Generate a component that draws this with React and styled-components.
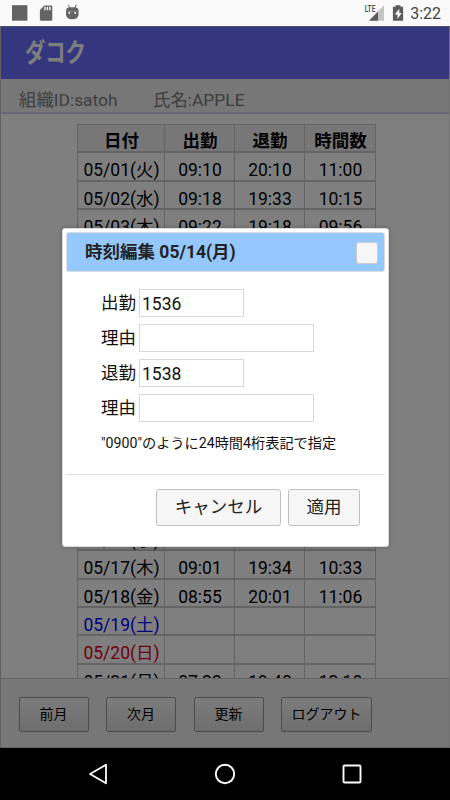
import React, { useState } from 'react'
import styled, { createGlobalStyle } from "styled-components"

const GlobalStyle = createGlobalStyle`
  *{
    box-sizing:border-box;
  }
  body{
    margin:0;
    font-family:Roboto,"Noto Sans CJK JP",sans-serif;
    overflow:hidden;
  }
`
const Screen = styled.div`
  width:450px;
  height:800px;
  display:flex;
  flex-direction:column;
  overflow:hidden;
  background-color:#000;
`
const StatusBar = styled.div`
  height:26px;
  flex:none;
  display:flex;
  justify-content:space-between;
  align-items:center;
  padding:0 9px 0 12px;
  background-color:#fafafa;
`
const StatusGroup = styled.div`
  display:flex;
  align-items:center;
  svg{
    display:block;
  }
`
const Clock = styled.span`
  margin-left:6px;
  padding-top:2px;
  font-size:16px;
  line-height:24px;
  color:#444;
`
const Page = styled.div`
  position:relative;
  height:722px;
  flex:none;
  display:flex;
  flex-direction:column;
  background-color:#fff;
  border:1px solid #c4c4c4;
  border-top-color:#9a9ad8;
  border-right-color:#e4e4e4;
`
const Header = styled.div`
  height:52px;
  flex:none;
  padding:9px 0 0 24px;
  background-color:#686efc;
`
const Logo = styled.div`
  width:80px;
  font-size:26px;
  line-height:34px;
  font-weight:bold;
  color:#fcfcfc;
  transform:scaleX(0.78);
  transform-origin:left;
`
const InfoBar = styled.div`
  height:35px;
  flex:none;
  display:flex;
  padding:9px 0 0 18px;
  font-size:17.4px;
  line-height:24px;
  color:#7c7c7c;
  background-color:#eee;
  border-bottom:2px solid #d0d0f0;
`
const InfoItem = styled.span`
  width:134px;
  white-space:nowrap;
`
const Content = styled.div`
  flex:1;
  min-height:0;
  overflow:hidden;
  padding:10px 0 0 76px;
`
const Table = styled.div`
  width:299px;
  border-top:1px solid #c8c8c8;
  border-left:1px solid #c8c8c8;
`
const TableRow = styled.div`
  display:grid;
  grid-template-columns:87px 70px 70px 71px;
  grid-template-rows:100%;
  height:28.42px;
  font-size:17.5px;
  line-height:23px;
  font-weight:${(props) => (props.$head ? "bold" : "normal")};
  background-color:${(props) => (props.$head ? "#eee" : "#fff")};
  > div{
    padding-top:${(props) => (props.$head ? "5px" : "6px")};
  }
`
const Cell = styled.div`
  padding-left:1px;
  text-align:center;
  white-space:nowrap;
  color:${(props) => props.$color || "#000"};
  border-right:1px solid #c8c8c8;
  border-bottom:2px solid #c8c8c8;
`
const Footer = styled.div`
  height:69px;
  flex:none;
  display:flex;
  align-items:flex-start;
  padding:18px 0 0 17.5px;
  background-color:#eee;
  border-top:1px solid #c8c8c8;
`
const FooterButton = styled.button`
  width:${(props) => props.$width || "70px"};
  height:35px;
  margin-right:17.5px;
  padding:0 0 2px;
  font-family:inherit;
  font-size:14px;
  line-height:20px;
  color:#000;
  background:linear-gradient(#f8f8f8,#dcdcdc);
  border:1px solid #969696;
  border-radius:2px;
`
const Overlay = styled.div`
  position:absolute;
  inset:-1px;
  display:flex;
  justify-content:center;
  align-items:flex-start;
  padding:202px 0 0 1px;
  background-color:rgba(0,0,0,0.5);
`
const Dialog = styled.div`
  width:327px;
  height:319px;
  padding:3px;
  background-color:#fff;
  border:1px solid #ddd;
  border-radius:3px;
  box-shadow:0 0 4px rgba(0,0,0,0.25);
  display:flex;
  flex-direction:column;
`
const DialogTitle = styled.div`
  height:40px;
  flex:none;
  display:flex;
  justify-content:space-between;
  align-items:center;
  padding:0 6px 0 18px;
  font-size:17.5px;
  line-height:26px;
  font-weight:bold;
  color:#222;
  background-color:#94c8ff;
  border:1px solid #ddd;
  border-radius:3px;
`
const CloseButton = styled.button`
  width:22px;
  height:22px;
  margin-top:1px;
  padding:0;
  background-color:#f6f6f6;
  border:1px solid #ccc;
  border-radius:3px;
`
const DialogBody = styled.div`
  flex:1;
  padding:17px 0 0 35px;
`
const Field = styled.label`
  height:28px;
  display:flex;
  align-items:center;
  margin-bottom:7px;
  font-size:17.5px;
  line-height:28px;
  color:#111;
`
const FieldName = styled.span`
  width:38px;
`
const Input = styled.input`
  width:${(props) => (props.$wide ? "175px" : "105px")};
  height:28px;
  padding:1px 2px 0;
  font-family:inherit;
  font-size:17.5px;
  color:#111;
  background-color:#fff;
  border:1px solid #d8d8d8;
  border-radius:0;
  outline:none;
`
const Hint = styled.div`
  padding-top:4px;
  font-size:14.2px;
  line-height:20px;
  color:#111;
`
const DialogButtons = styled.div`
  height:69px;
  flex:none;
  display:flex;
  justify-content:flex-end;
  gap:7px;
  padding:14px 25px 0 0;
  border-top:1px solid #ddd;
`
const DialogButton = styled.button`
  width:${(props) => props.$width};
  height:37px;
  padding:0 0 2px;
  font-family:inherit;
  font-size:17.5px;
  line-height:24px;
  color:#222;
  background-color:#f6f6f6;
  border:1px solid #c0c0c0;
  border-radius:3px;
`
const NavBar = styled.div`
  flex:1;
  display:flex;
  justify-content:center;
  align-items:center;
  gap:103px;
  background-color:#000;
`

const days = [
    { day: "05/01(火)", start: "09:10", end: "20:10", hours: "11:00" },
    { day: "05/02(水)", start: "09:18", end: "19:33", hours: "10:15" },
    { day: "05/03(木)", start: "09:22", end: "19:18", hours: "09:56" },
    { day: "05/04(金)" },
    { day: "05/07(月)" },
    { day: "05/08(火)" },
    { day: "05/09(水)" },
    { day: "05/10(木)" },
    { day: "05/11(金)" },
    { day: "05/12(土)", color: "#0000ff" },
    { day: "05/13(日)", color: "#dc143c" },
    { day: "05/14(月)", start: "15:36", end: "15:38" },
    { day: "05/15(火)" },
    { day: "05/16(水)" },
    { day: "05/17(木)", start: "09:01", end: "19:34", hours: "10:33" },
    { day: "05/18(金)", start: "08:55", end: "20:01", hours: "11:06" },
    { day: "05/19(土)", color: "#0000ff" },
    { day: "05/20(日)", color: "#dc0020" },
    { day: "05/21(月)", start: "07:22", end: "19:40", hours: "12:18" },
]

const StatusIcons = () => (
    <svg width="70" height="26" viewBox="12 0 70 26">
        <rect x="12" y="5.2" width="15.4" height="15.5" fill="#636363" />
        <path d="M44.3 5.4H51a1.3 1.3 0 0 1 1.3 1.3v12.8a1.3 1.3 0 0 1-1.3 1.3H41.2a1.3 1.3 0 0 1-1.3-1.3V10z" fill="#636363" />
        <path d="M45 6.8v3.4M47.5 6.8v3.4M50 6.8v3.4" stroke="#fafafa" strokeWidth="1.4" />
        <path d="M66 10.8q0-3.6 4-3.6h4.6q4 0 4 3.6v3.4q0 5-6.3 5T66 14.2z" fill="#636363" />
        <path d="M68.4 4.8l1.2 2.8M76.2 4.8l-1.2 2.8" stroke="#636363" strokeWidth="1" />
        <path d="M66.3 11.2h12" stroke="#999" strokeWidth="0.6" />
        <circle cx="69.3" cy="13" r="0.9" fill="#fff" />
        <circle cx="75.2" cy="13" r="0.9" fill="#fff" />
    </svg>
)

const SignalIcons = () => (
    <svg width="40" height="26" viewBox="364 0 40 26">
        <text x="364.8" y="12" fontSize="8.8" fontWeight="bold" fill="#555" textLength="10.5" lengthAdjust="spacingAndGlyphs">LTE</text>
        <path d="M384 5.3V20.8H369z" fill="#c4c4c4" />
        <path d="M378 11.5V20.8H369z" fill="#5c5c5c" />
        <path d="M395.5 5.2h5v1.6h2.6v14h-10.2v-14h2.6z" fill="#5c5c5c" />
        <path d="M399.3 8.8l-4.5 5.7h2.7v4.4l4.2-5.9h-2.4z" fill="#fafafa" />
    </svg>
)

const TimeField = ({ name, value, wide, onChange }) => (
    <Field>
        <FieldName>{name}</FieldName>
        <Input type="text" $wide={wide} value={value} onChange={(e) => onChange(e.target.value)} />
    </Field>
)

const App = () => {
    const [open, setOpen] = useState(true)
    const [start, setStart] = useState("1536")
    const [startReason, setStartReason] = useState("")
    const [end, setEnd] = useState("1538")
    const [endReason, setEndReason] = useState("")

    const closeDialog = () => {
        setOpen(false)
    }

    return (
        <Screen>
            <GlobalStyle />
            <StatusBar>
                <StatusGroup><StatusIcons /></StatusGroup>
                <StatusGroup>
                    <SignalIcons />
                    <Clock>3:22</Clock>
                </StatusGroup>
            </StatusBar>

            <Page>
                <Header><Logo>ダコク</Logo></Header>
                <InfoBar>
                    <InfoItem>組織ID:satoh</InfoItem>
                    <InfoItem>氏名:APPLE</InfoItem>
                </InfoBar>
                <Content>
                    <Table>
                        <TableRow $head>
                            <Cell>日付</Cell>
                            <Cell>出勤</Cell>
                            <Cell>退勤</Cell>
                            <Cell>時間数</Cell>
                        </TableRow>
                        {days.map((d) => (
                            <TableRow key={d.day}>
                                <Cell $color={d.color}>{d.day}</Cell>
                                <Cell>{d.start}</Cell>
                                <Cell>{d.end}</Cell>
                                <Cell>{d.hours}</Cell>
                            </TableRow>
                        ))}
                    </Table>
                </Content>
                <Footer>
                    <FooterButton>前月</FooterButton>
                    <FooterButton>次月</FooterButton>
                    <FooterButton>更新</FooterButton>
                    <FooterButton $width="91px">ログアウト</FooterButton>
                </Footer>

                {open && <Overlay>
                    <Dialog>
                        <DialogTitle>
                            時刻編集 05/14(月)
                            <CloseButton onClick={closeDialog} />
                        </DialogTitle>
                        <DialogBody>
                            <TimeField name="出勤" value={start} onChange={setStart} />
                            <TimeField name="理由" wide value={startReason} onChange={setStartReason} />
                            <TimeField name="退勤" value={end} onChange={setEnd} />
                            <TimeField name="理由" wide value={endReason} onChange={setEndReason} />
                            <Hint>"0900"のように24時間4桁表記で指定</Hint>
                        </DialogBody>
                        <DialogButtons>
                            <DialogButton $width="125px" onClick={closeDialog}>キャンセル</DialogButton>
                            <DialogButton $width="72px" onClick={closeDialog}>適用</DialogButton>
                        </DialogButtons>
                    </Dialog>
                </Overlay>}
            </Page>

            <NavBar>
                <svg width="24" height="24" viewBox="0 0 24 24" fill="none" stroke="#fff" strokeWidth="1.8" strokeLinejoin="round">
                    <path d="M20 2.7v18.6L4 12z" />
                </svg>
                <svg width="24" height="24" viewBox="0 0 24 24" fill="none" stroke="#fff" strokeWidth="1.9">
                    <circle cx="12" cy="12" r="9.2" />
                </svg>
                <svg width="24" height="24" viewBox="0 0 24 24" fill="none" stroke="#fff" strokeWidth="1.9">
                    <rect x="3.5" y="3.5" width="17" height="17" rx="1" />
                </svg>
            </NavBar>
        </Screen>
    )
}

export default App
